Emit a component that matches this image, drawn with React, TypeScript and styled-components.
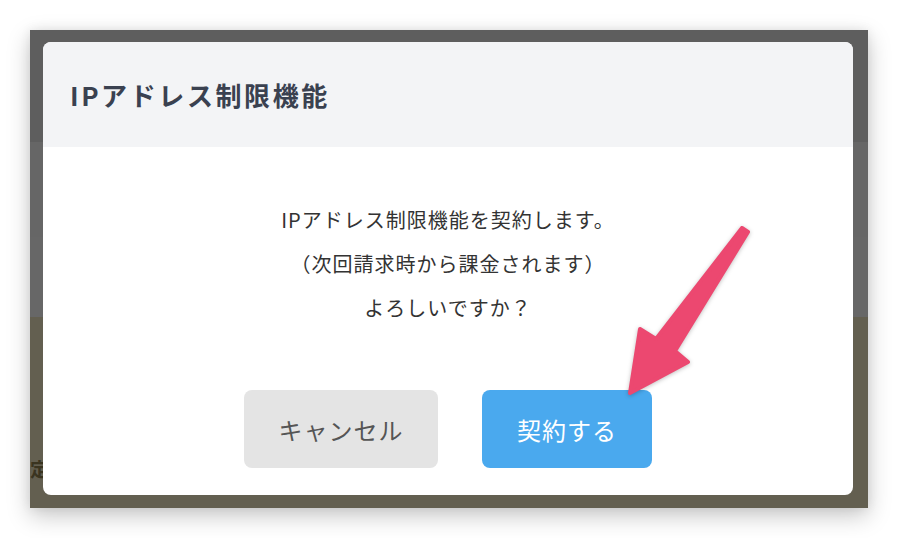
import React from "react";
import styled, { createGlobalStyle } from "styled-components";

const GlobalStyle = createGlobalStyle`
  body {
    margin: 0;
    background: #ffffff;
    font-family: "Noto Sans CJK JP", "Noto Sans", sans-serif;
  }
`;

const Page = styled.div`
  position: relative;
  width: 898px;
  height: 538px;
  padding: 30px 0 0 30px;
  box-sizing: border-box;
`;

const Frame = styled.div`
  position: relative;
  width: 838px;
  height: 478px;
  overflow: hidden;
  box-shadow: 0 8px 22px rgba(0, 0, 0, 0.22), 0 0 10px rgba(0, 0, 0, 0.08);
`;

const Backdrop = styled.div`
  display: flex;
  flex-direction: column;
  height: 100%;
`;

const Band = styled.div<{ $h?: number; $bg: string }>`
  flex: ${(p) => (p.$h ? `0 0 ${p.$h}px` : "1")};
  background: ${(p) => p.$bg};
  display: flex;
  align-items: flex-end;
`;

const BackText = styled.span`
  margin: 0 0 26px 0;
  font-size: 19px;
  font-weight: 700;
  color: #3a3420;
`;

const Modal = styled.div`
  position: absolute;
  top: 12px;
  left: 13px;
  width: 810px;
  height: 453px;
  background: #ffffff;
  border-radius: 8px;
  overflow: hidden;
  display: flex;
  flex-direction: column;
`;

const Header = styled.div`
  flex: 0 0 105px;
  display: flex;
  align-items: center;
  padding-left: 27px;
  background: #f3f4f6;
`;

const Title = styled.h2`
  margin: 0;
  font-size: 26px;
  font-weight: 700;
  letter-spacing: 2.6px;
  color: #3a4150;
`;

const Body = styled.div`
  display: flex;
  flex-direction: column;
  align-items: center;
  padding-top: 51px;
`;

const Message = styled.p`
  margin: 0;
  font-size: 20px;
  line-height: 44px;
  letter-spacing: 1px;
  color: #333333;
  text-align: center;
`;

const Actions = styled.div`
  display: flex;
  justify-content: center;
  gap: 44px;
  margin-top: 60px;
`;

const Button = styled.button<{ $primary?: boolean; $w: number }>`
  width: ${(p) => p.$w}px;
  height: 78px;
  border: none;
  border-radius: 8px;
  font-family: inherit;
  font-size: 24px;
  letter-spacing: 1px;
  background: ${(p) => (p.$primary ? "#4aa9ee" : "#e4e4e4")};
  color: ${(p) => (p.$primary ? "#ffffff" : "#555555")};
  cursor: pointer;
`;

const Annotation = styled.svg`
  position: absolute;
  left: 0;
  top: 0;
  pointer-events: none;
  filter: drop-shadow(0 1px 2px rgba(0, 0, 0, 0.25));
`;

const App: React.FC = () => {
  return (
    <>
      <GlobalStyle />
      <Page>
        <Frame>
          <Backdrop>
            <Band $h={112} $bg="#5e5e5e" />
            <Band $h={95} $bg="#666666" />
            <Band $h={80} $bg="#676767" />
            <Band $bg="#635f50">
              <BackText>定</BackText>
            </Band>
          </Backdrop>
          <Modal>
            <Header>
              <Title>IPアドレス制限機能</Title>
            </Header>
            <Body>
              <Message>
                IPアドレス制限機能を契約します。
                <br />
                （次回請求時から課金されます）
                <br />
                よろしいですか？
              </Message>
              <Actions>
                <Button $w={194}>キャンセル</Button>
                <Button $primary $w={170}>
                  契約する
                </Button>
              </Actions>
            </Body>
          </Modal>
        </Frame>
        <Annotation width="898" height="538" viewBox="0 0 898 538">
          <polygon
            points="742,228 748,232 675,351 688,362 630,393 640,329 656,339"
            fill="#ec4870"
            stroke="#ec4870"
            strokeWidth="4"
            strokeLinejoin="round"
          />
        </Annotation>
      </Page>
    </>
  );
};

export default App;
